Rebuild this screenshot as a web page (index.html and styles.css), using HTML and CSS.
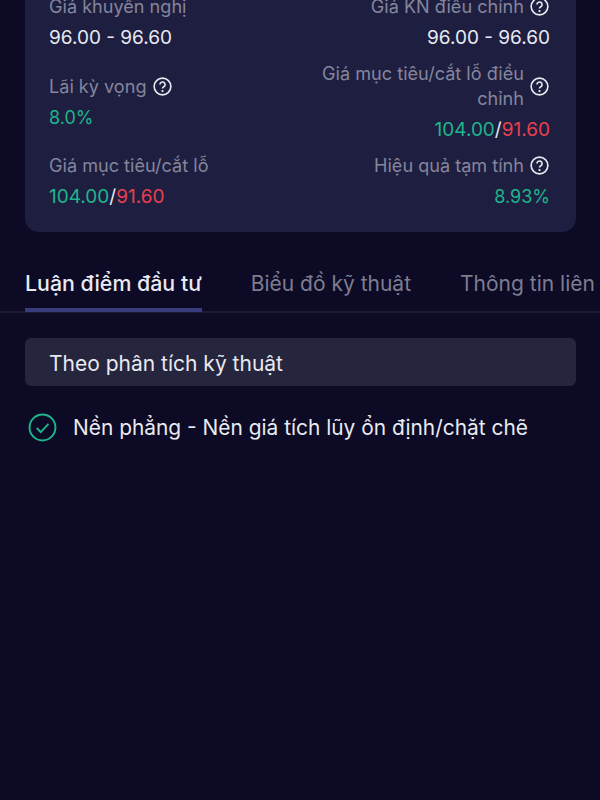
FILE: index.html
```html
<!DOCTYPE html>
<html lang="vi">
<head>
    <meta charset="UTF-8">
    <meta name="viewport" content="width=device-width, initial-scale=1.0">
    <title>Luận điểm đầu tư</title>
    <link rel="stylesheet" href="styles.css">
</head>
<body>
    <div class="card">
        <div class="cell">
            <div class="label">Giá khuyến nghị</div>
            <div class="value">96.00 - 96.60</div>
        </div>
        <div class="cell cell-right">
            <div class="label"><span>Giá KN điều chỉnh</span>
                <svg class="help" viewBox="0 0 20 20"><circle cx="10" cy="10" r="8.8"/><path d="M7.3 8a2.7 2.7 0 1 1 4.2 2.2c-1 .7-1.5 1-1.5 2"/><circle class="dot" cx="10" cy="14.8" r="1.2"/></svg>
            </div>
            <div class="value">96.00 - 96.60</div>
        </div>
        <div class="cell">
            <div class="label"><span>Lãi kỳ vọng</span>
                <svg class="help" viewBox="0 0 20 20"><circle cx="10" cy="10" r="8.8"/><path d="M7.3 8a2.7 2.7 0 1 1 4.2 2.2c-1 .7-1.5 1-1.5 2"/><circle class="dot" cx="10" cy="14.8" r="1.2"/></svg>
            </div>
            <div class="value percent up">8.0%</div>
        </div>
        <div class="cell cell-right">
            <div class="label"><span>Giá mục tiêu/cắt lỗ điều chỉnh</span>
                <svg class="help" viewBox="0 0 20 20"><circle cx="10" cy="10" r="8.8"/><path d="M7.3 8a2.7 2.7 0 1 1 4.2 2.2c-1 .7-1.5 1-1.5 2"/><circle class="dot" cx="10" cy="14.8" r="1.2"/></svg>
            </div>
            <div class="value"><span class="up">104.00</span>/<span class="down">91.60</span></div>
        </div>
        <div class="cell">
            <div class="label">Giá mục tiêu/cắt lỗ</div>
            <div class="value"><span class="up">104.00</span>/<span class="down">91.60</span></div>
        </div>
        <div class="cell cell-right">
            <div class="label"><span>Hiệu quả tạm tính</span>
                <svg class="help" viewBox="0 0 20 20"><circle cx="10" cy="10" r="8.8"/><path d="M7.3 8a2.7 2.7 0 1 1 4.2 2.2c-1 .7-1.5 1-1.5 2"/><circle class="dot" cx="10" cy="14.8" r="1.2"/></svg>
            </div>
            <div class="value percent up">8.93%</div>
        </div>
    </div>

    <div class="tabs">
        <div class="tab tab-active">Luận điểm đầu tư</div>
        <div class="tab">Biểu đồ kỹ thuật</div>
        <div class="tab">Thông tin liên hệ</div>
    </div>

    <div class="section-title">Theo phân tích kỹ thuật</div>

    <div class="point">
        <svg class="check" viewBox="0 0 30 30"><circle cx="15" cy="15" r="13.4"/><path d="M9 15.5l4.2 4.2 8-8.4"/></svg>
        <span>Nền phẳng - Nền giá tích lũy ổn định/chặt chẽ</span>
    </div>
</body>
</html>
```

FILE: styles.css
```css
html, body {
    height: 100%;
}
body {
    margin: 0;
    overflow: hidden;
    background-color: #0c0a24;
    color: #e9e9f1;
    font-family: "Inter", "Noto Sans", sans-serif;
    font-size: 21px;
    line-height: 25px;
}
.card {
    display: grid;
    grid-template-columns: 1fr 1fr;
    gap: 11px 0;
    align-items: center;
    margin: -30px 24px 0 25px;
    padding: 24px 26px 23px 24px;
    background-color: #1e1f40;
    border-radius: 14px;
}
.cell {
    display: flex;
    flex-direction: column;
    gap: 6px;
}
.cell-right {
    align-items: flex-end;
    text-align: right;
}
.label {
    display: flex;
    align-items: center;
    gap: 6px;
    font-size: 18.1px;
    color: #85859c;
}
.cell-right .label {
    padding-right: 1px;
}
.value {
    font-size: 19px;
    color: #e9e9f1;
}
.percent {
    font-size: 18px;
}
.up {
    color: #1fb58d;
}
.down {
    color: #e8404e;
}
.help {
    flex: none;
    width: 19px;
    height: 19px;
    fill: none;
    stroke: #e9e9f1;
    stroke-width: 1.7;
}
.help .dot {
    fill: #e9e9f1;
    stroke: none;
}
.tabs {
    display: flex;
    gap: 49px;
    margin-top: 26px;
    padding-left: 25px;
    border-bottom: 2px solid #1d1c36;
    white-space: nowrap;
}
.tab {
    flex: none;
    padding: 13px 0 12px;
    margin-bottom: -1px;
    color: #7d7d92;
    border-bottom: 4px solid transparent;
}
.tab-active {
    font-size: 21.35px;
    font-weight: 500;
    color: #e9e9f1;
    border-bottom-color: #3a3c7c;
}
.section-title {
    margin: 25px 24px 0 25px;
    padding: 13px 24px 10px;
    background-color: #25253d;
    border-radius: 6px;
}
.point {
    display: flex;
    align-items: center;
    gap: 16px;
    margin-top: 27px;
    padding-left: 28px;
    font-size: 20.9px;
}
.check {
    flex: none;
    width: 29px;
    height: 29px;
    fill: none;
    stroke: #1fb58d;
    stroke-width: 2;
}
```
